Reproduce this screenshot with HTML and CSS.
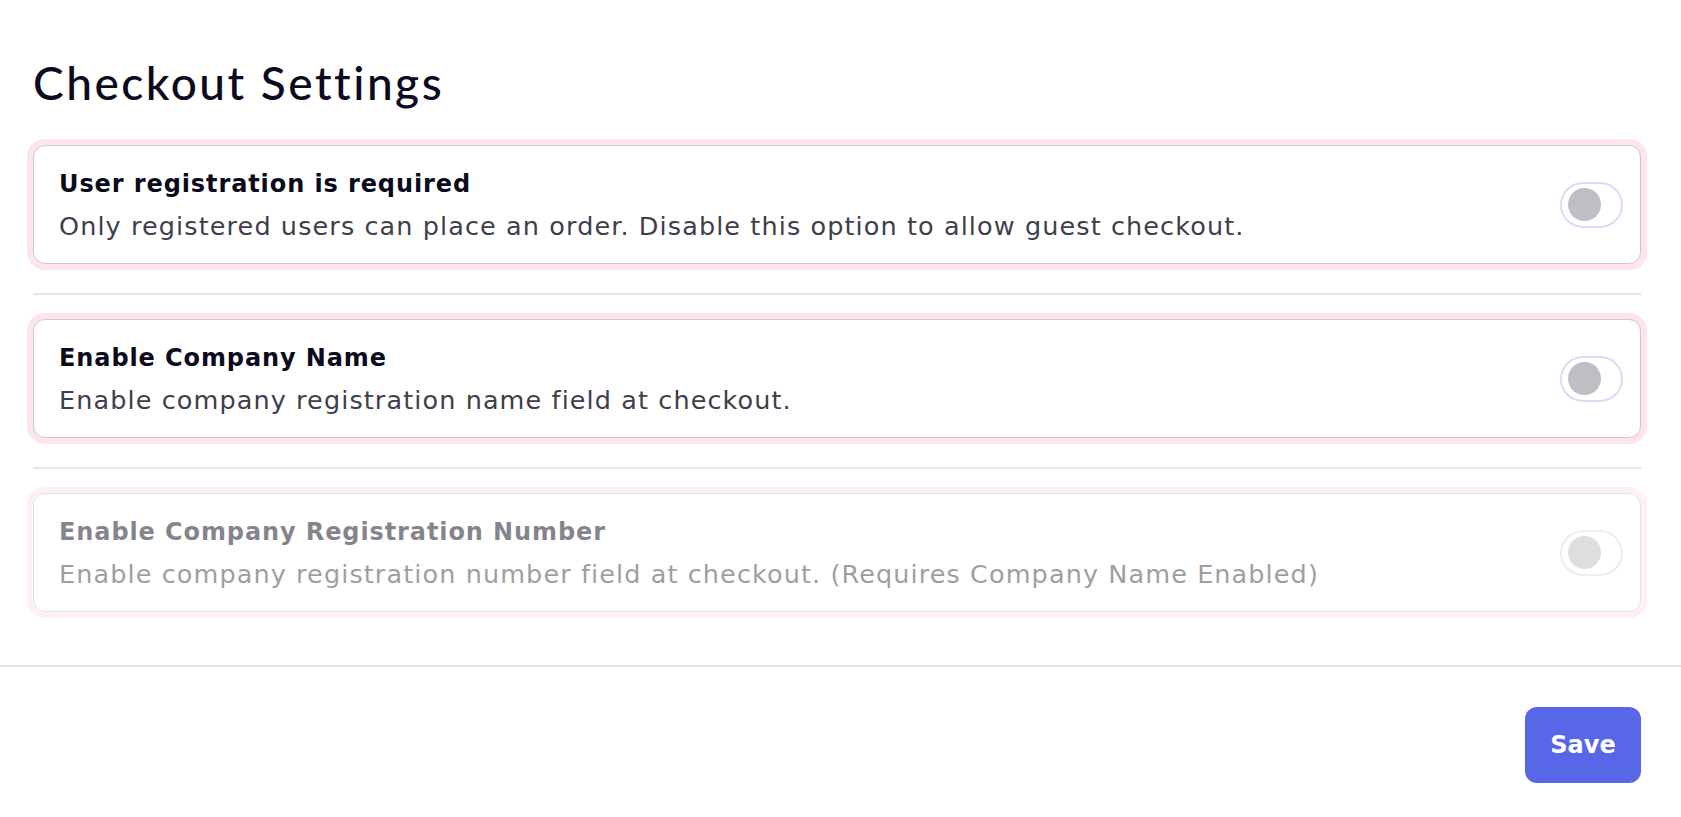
FILE: index.html
```html
<!DOCTYPE html>
<html lang="en">
<head>
<meta charset="utf-8">
<title>Checkout Settings</title>
<link rel="stylesheet" href="styles.css">
</head>
<body>
<main class="settings">
  <h1 class="page-title">Checkout Settings</h1>
  <div class="option-list">
    <div class="option">
      <div class="option-text">
        <div class="option-title">User registration is required</div>
        <div class="option-desc">Only registered users can place an order. Disable this option to allow guest checkout.</div>
      </div>
      <div class="toggle"><span class="knob"></span></div>
    </div>
    <div class="divider"></div>
    <div class="option">
      <div class="option-text">
        <div class="option-title">Enable Company Name</div>
        <div class="option-desc">Enable company registration name field at checkout.</div>
      </div>
      <div class="toggle"><span class="knob"></span></div>
    </div>
    <div class="divider"></div>
    <div class="option option-disabled">
      <div class="option-text">
        <div class="option-title">Enable Company Registration Number</div>
        <div class="option-desc">Enable company registration number field at checkout. (Requires Company Name Enabled)</div>
      </div>
      <div class="toggle"><span class="knob"></span></div>
    </div>
  </div>
</main>
<footer class="actions">
  <button class="save-btn" type="button">Save</button>
</footer>
</body>
</html>
```

FILE: styles.css
```css
* { box-sizing: border-box; }
html, body { margin: 0; padding: 0; background: #ffffff; }
body {
  font-family: "DejaVu Sans", "Open Sans", sans-serif;
  color: #0c0b1e;
}
.settings {
  padding: 55px 40px 0 33px;
}
.page-title {
  margin: 0 0 34px 0;
  font-family: "Lato", "Noto Sans", sans-serif;
  font-weight: 500;
  font-size: 46px;
  line-height: 56px;
  letter-spacing: 2.5px;
  color: #0b0a1f;
}
.option-list {
  display: flex;
  flex-direction: column;
}
.option {
  display: flex;
  align-items: center;
  justify-content: space-between;
  height: 119px;
  padding: 0 17px 0 25px;
  border: 1px solid #c9c5e1;
  border-radius: 12px;
  box-shadow: 0 0 0 6px #fde4ed;
  background: #ffffff;
}
.option-disabled {
  opacity: 0.5;
}
.option-title {
  font-weight: 700;
  font-size: 24px;
  line-height: 42px;
  letter-spacing: 0.9px;
  color: #0c0b1e;
}
.option-desc {
  font-size: 25.5px;
  line-height: 42px;
  color: #3f3e4c;
  letter-spacing: 1.1px;
}
.divider {
  height: 2px;
  background: #e4e3f2;
  margin: 29px 0 24px 0;
}
.toggle {
  display: flex;
  align-items: center;
  width: 63px;
  height: 46px;
  padding-left: 6px;
  border: 2px solid #dcdaf4;
  border-radius: 23px;
  flex-shrink: 0;
}
.knob {
  width: 33px;
  height: 33px;
  border-radius: 50%;
  background: #bfbec3;
}
.actions {
  margin-top: 53px;
  border-top: 2px solid #e0e3f0;
  padding: 40px 40px 0 0;
  display: flex;
  justify-content: flex-end;
}
.save-btn {
  width: 116px;
  height: 76px;
  border: none;
  border-radius: 12px;
  background: #5867e8;
  color: #ffffff;
  font-family: "DejaVu Sans", "Open Sans", sans-serif;
  font-weight: 600;
  font-size: 24px;
}
```
